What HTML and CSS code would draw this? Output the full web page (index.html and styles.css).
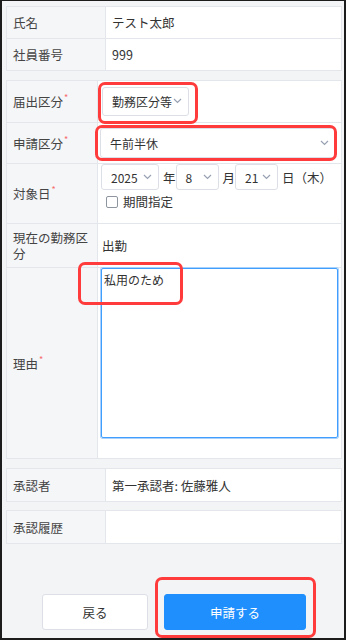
FILE: index.html
```html
<!DOCTYPE html>
<html lang="ja">
<head>
  <meta charset="UTF-8">
  <title>勤務区分申請</title>
  <meta name="viewport" content="width=device-width, initial-scale=1.0">
  <link rel="stylesheet" href="styles.css">
</head>
<body>

  <div id="frame">

    <!-- employee info -->
    <div class="table wide">
      <div class="row"><div class="label">氏名</div><div class="value">テスト太郎</div></div>
      <div class="row"><div class="label">社員番号</div><div class="value">999</div></div>
    </div>

    <!-- request form -->
    <div class="table narrow">
      <div class="row r-kind">
        <div class="label"><span>届出区分<span class="req">*</span></span></div>
        <div class="value">
          <div class="select sel-kind"><span>勤務区分等</span><svg class="chev" width="9" height="6" viewBox="0 0 9 6"><polyline points="1,1 4.5,4.5 8,1"/></svg></div>
        </div>
      </div>
      <div class="row r-type">
        <div class="label"><span>申請区分<span class="req">*</span></span></div>
        <div class="value">
          <div class="select sel-type"><span>午前半休</span><svg class="chev" width="9" height="6" viewBox="0 0 9 6"><polyline points="1,1 4.5,4.5 8,1"/></svg></div>
        </div>
      </div>
      <div class="row r-date">
        <div class="label"><span>対象日<span class="req">*</span></span></div>
        <div class="value date-cell">
          <div class="date-line">
            <div class="select sel-year"><span>2025</span><svg class="chev" width="9" height="6" viewBox="0 0 9 6"><polyline points="1,1 4.5,4.5 8,1"/></svg></div><span class="unit">年</span>
            <div class="select sel-day"><span>8</span><svg class="chev" width="9" height="6" viewBox="0 0 9 6"><polyline points="1,1 4.5,4.5 8,1"/></svg></div><span class="unit">月</span>
            <div class="select sel-day"><span>21</span><svg class="chev" width="9" height="6" viewBox="0 0 9 6"><polyline points="1,1 4.5,4.5 8,1"/></svg></div><span class="unit">日（木）</span>
          </div>
          <label class="check"><span class="box"></span>期間指定</label>
        </div>
      </div>
      <div class="row r-now">
        <div class="label two">現在の勤務区分</div>
        <div class="value">出勤</div>
      </div>
      <div class="row r-reason">
        <div class="label"><span>理由<span class="req">*</span></span></div>
        <div class="value reason-cell">
          <div class="textarea">私用のため</div>
        </div>
      </div>
    </div>

    <!-- approval -->
    <div class="table wide single">
      <div class="row"><div class="label">承認者</div><div class="value">第一承認者: 佐藤雅人</div></div>
    </div>
    <div class="table wide single">
      <div class="row"><div class="label">承認履歴</div><div class="value"></div></div>
    </div>

    <div class="actions">
      <button class="btn back">戻る</button>
      <button class="btn submit">申請する</button>
    </div>
  </div>

  <!-- red annotation boxes -->
  <div class="mark m1"></div>
  <div class="mark m2"></div>
  <div class="mark m3"></div>
  <div class="mark m4"></div>

</body>
</html>
```

FILE: styles.css
```css
html, body{
  margin: 0;
  padding: 0;
  height: 100%;
  overflow: hidden;
}
body{
  position: relative;
  background-color: #f3f4f6;
  color: #333;
  font-family: "Noto Sans CJK JP", "Noto Sans", sans-serif;
  font-size: 12.5px;
  white-space: nowrap;
}
#frame{
  box-sizing: border-box;
  height: 640px;
  border-top: 1px solid #1c1c1c;
  border-left: 2px solid #1c1c1c;
  border-right: 2px solid #1c1c1c;
  border-bottom: 2px solid #1c1c1c;
  padding: 5px 2px 0 4px;
}
.table{
  border: 1px solid #e3e6ea;
  border-bottom: none;
  margin-bottom: 9px;
}
.row{
  display: flex;
  border-bottom: 1px solid #e3e6ea;
  min-height: 31px;
}
.label{
  box-sizing: border-box;
  flex: none;
  display: flex;
  align-items: center;
  padding: 0 6px;
  background-color: #f5f6f8;
  border-right: 1px solid #e3e6ea;
  color: #444;
}
.wide .label{
  width: 99px;
}
.narrow .label{
  width: 91px;
}
.label.two{
  line-height: 16px;
  white-space: normal;
}
.req{
  color: #f56c6c;
  font-size: 9px;
  vertical-align: top;
  position: relative;
  top: -1px;
  margin-left: 1px;
}
.value{
  flex: 1;
  display: flex;
  align-items: center;
  padding: 0 6px;
  background-color: #fff;
}
.narrow .value{
  padding: 0 3px 0 4px;
}
.table.single{
  margin-bottom: 8px;
}
.table.single .row{
  min-height: 32px;
}

/* selects */
.select{
  box-sizing: border-box;
  display: flex;
  align-items: center;
  justify-content: space-between;
  background-color: #fff;
  border: 1px solid #dcdfe6;
  border-radius: 3px;
  padding: 0 6px 0 9px;
  font-size: 12px;
}
.chev{
  fill: none;
  stroke: #98a1b3;
  stroke-width: 1.2;
  flex: none;
}
.r-kind{
  height: 41px;
}
.sel-kind{
  width: 87px;
  height: 29px;
  margin-top: -1px;
}
.r-type{
  height: 40px;
}
.sel-type{
  width: 100%;
  height: 30px;
  margin-left: -2px;
}
.r-date{
  height: 59px;
}
.date-cell{
  flex-direction: column;
  align-items: flex-start;
  justify-content: flex-start;
  padding-top: 9px;
}
.date-line{
  display: flex;
  align-items: center;
}
.sel-year{
  width: 58px;
  height: 26px;
  margin-left: -1px;
  margin-right: 4px;
}
.sel-day{
  width: 43px;
  height: 26px;
  margin-right: 4px;
}
.check{
  display: flex;
  align-items: center;
  margin-top: 2px;
  margin-left: 4px;
}
.box{
  box-sizing: border-box;
  width: 12px;
  height: 12px;
  border: 1px solid #8f959e;
  border-radius: 2px;
  background-color: #fff;
  margin-right: 5px;
}
.r-now{
  height: 43px;
}
.r-reason{
  height: 190px;
}
.reason-cell{
  align-items: flex-start;
  padding-top: 8px;
}
.textarea{
  box-sizing: border-box;
  width: 237px;
  height: 170px;
  border: 1px solid #409eff;
  box-shadow: 0 0 0 1px #a9d1fb;
  border-radius: 2px;
  padding: 2px 2px;
  margin-left: -1px;
  font-size: 12px;
  color: #333;
}

/* buttons */
.actions{
  display: flex;
  justify-content: center;
  gap: 16px;
  margin-top: 50px;
}
.btn{
  height: 36px;
  border-radius: 3px;
  font-family: inherit;
  font-size: 12.5px;
  cursor: pointer;
}
.back{
  width: 106px;
  background-color: #fff;
  border: 1px solid #dcdfe6;
  color: #333;
}
.submit{
  width: 142px;
  background-color: #1f8ffd;
  border: 1px solid #1f8ffd;
  color: #fff;
}

/* annotation marks */
.mark{
  position: absolute;
  box-sizing: border-box;
  border: 3px solid #ff3b3b;
  border-radius: 7px;
}
.m1{ left: 98px; top: 82px; width: 100px; height: 42px; }
.m2{ left: 95px; top: 125px; width: 242px; height: 36px; }
.m3{ left: 78px; top: 262px; width: 105px; height: 43px; }
.m4{ left: 155px; top: 577px; width: 161px; height: 61px; }
```
